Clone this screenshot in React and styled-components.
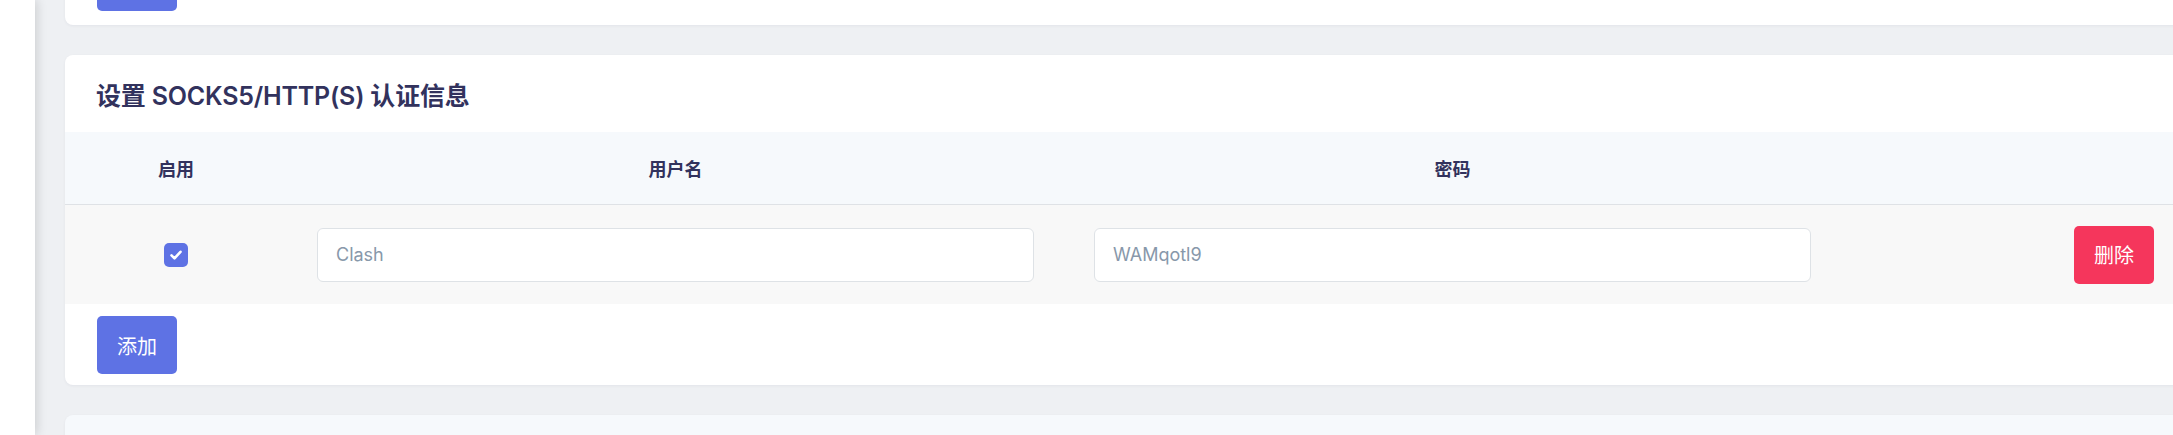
import React from "react";
import styled, { createGlobalStyle } from "styled-components";

const GlobalStyle = createGlobalStyle`
  html, body {
    margin: 0;
    background: #eef0f3;
    font-family: Inter, "Noto Sans CJK SC", sans-serif;
    overflow: hidden;
  }
  * { box-sizing: border-box; }
`;

const Shell = styled.div`
  display: flex;
  height: 100vh;
`;

const Sidebar = styled.aside`
  width: 35px;
  flex-shrink: 0;
  background: #fff;
  box-shadow: 2px 0 10px rgba(0, 0, 0, 0.14);
  z-index: 1;
`;

const Main = styled.main`
  flex: 1;
  padding-left: 30px;
  overflow: hidden;
`;

// scrolled down a bit, so the previous card is cut at the top
const Scroller = styled.div`
  display: flex;
  flex-direction: column;
  gap: 30px;
  margin-top: -59px;
`;

const Card = styled.section`
  width: 2322px;
  flex-shrink: 0;
  background: ${(p) => (p.$muted ? "#f6f9fc" : "#fff")};
  border-radius: 8px;
  overflow: hidden;
  box-shadow: 0 1px 3px rgba(50, 50, 93, 0.06);
  min-height: ${(p) => (p.$muted ? "100px" : "auto")};
`;

const CardHeader = styled.div`
  height: 77px;
  display: flex;
  align-items: center;
  padding: 0 31px;
`;

const Title = styled.h3`
  margin: 0;
  font-size: 25px;
  font-weight: 600;
  color: #32325d;
  letter-spacing: -0.2px;
`;

const CardFooter = styled.div`
  padding: 12px 32px 11px;
`;

const Row = styled.div`
  display: grid;
  grid-template-columns: 222px 777px 777px 1fr;
  align-items: center;
`;

const HeadRow = styled(Row)`
  height: 73px;
  background: #f6f9fc;
  border-bottom: 1px solid #dfe2e6;
`;

const BodyRow = styled(Row)`
  height: 99px;
  background: #f8f8f8;
`;

const HeadCell = styled.div`
  text-align: center;
  font-size: 18px;
  font-weight: 700;
  color: #32325d;
`;

const Cell = styled.div`
  display: flex;
  justify-content: center;
  align-items: center;
  padding: 0 30px;
`;

const Input = styled.input`
  width: 100%;
  height: 54px;
  padding: 0 18px;
  border: 1px solid #dee2e6;
  border-radius: 6px;
  background: #fff;
  font-family: inherit;
  font-size: 18px;
  color: #32325d;
  outline: none;
  &::placeholder { color: #8898aa; }
`;

const Check = styled.span`
  width: 24px;
  height: 24px;
  border-radius: 5px;
  background: #5e72e4;
  display: inline-flex;
  align-items: center;
  justify-content: center;
`;

const Button = styled.button`
  width: 80px;
  height: 58px;
  border: none;
  border-radius: 5px;
  background: ${(p) => (p.$variant === "danger" ? "#f5365c" : "#5e72e4")};
  color: #fff;
  font-family: "Noto Sans CJK SC", sans-serif;
  font-size: 20px;
  font-weight: 400;
  cursor: pointer;
`;

export default function App() {
  const users = [{ enabled: true, name: "Clash", password: "WAMqotl9" }];

  return (
    <>
      <GlobalStyle />
      <Shell>
        <Sidebar />
        <Main>
          <Scroller>
            <Card>
              <CardFooter>
                <Button aria-label="保存" />
              </CardFooter>
            </Card>

            <Card>
              <CardHeader>
                <Title>设置 SOCKS5/HTTP(S) 认证信息</Title>
              </CardHeader>
              <HeadRow>
                <HeadCell>启用</HeadCell>
                <HeadCell>用户名</HeadCell>
                <HeadCell>密码</HeadCell>
                <HeadCell />
              </HeadRow>
              {users.map((u, i) => (
                <BodyRow key={i}>
                  <Cell>
                    <Check>
                      {u.enabled && (
                        <svg width="14" height="14" viewBox="0 0 14 14">
                          <path d="M2.5 7.3l3 3L11.5 3.8" fill="none" stroke="#fff" strokeWidth="2.6" strokeLinecap="round" strokeLinejoin="round" />
                        </svg>
                      )}
                    </Check>
                  </Cell>
                  <Cell>
                    <Input placeholder={u.name} />
                  </Cell>
                  <Cell>
                    <Input placeholder={u.password} />
                  </Cell>
                  <Cell>
                    <Button $variant="danger">删除</Button>
                  </Cell>
                </BodyRow>
              ))}
              <CardFooter>
                <Button>添加</Button>
              </CardFooter>
            </Card>

            <Card $muted />
          </Scroller>
        </Main>
      </Shell>
    </>
  );
}
